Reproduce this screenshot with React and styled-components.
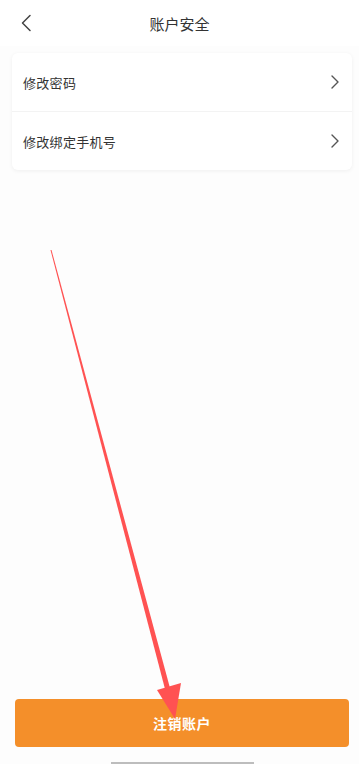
import React from "react";
import styled, { createGlobalStyle } from "styled-components";

const Global = createGlobalStyle`
  html, body {
    margin: 0;
    padding: 0;
    background: #fdfdfd;
    font-family: "Noto Sans CJK SC", "Noto Sans", sans-serif;
  }
`;

const Page = styled.div`
  position: relative;
  width: 359px;
  height: 764px;
  display: flex;
  flex-direction: column;
  background: #fdfdfd;
  overflow: hidden;
`;

const Header = styled.div`
  height: 46px;
  display: flex;
  align-items: center;
  justify-content: center;
  position: relative;
  background: #ffffff;
`;

const Back = styled.button`
  position: absolute;
  left: 16px;
  top: 12px;
  width: 20px;
  height: 22px;
  padding: 0;
  border: none;
  background: none;
  display: flex;
  align-items: center;
  justify-content: center;
`;

const Title = styled.div`
  font-size: 15px;
  color: #333333;
  line-height: 1;
`;

const Card = styled.div`
  margin: 7px 7px 0 12px;
  background: #ffffff;
  border-radius: 6px;
  box-shadow: 0 1px 4px rgba(0, 0, 0, 0.06);
  display: flex;
  flex-direction: column;
`;

const Row = styled.div`
  height: 58px;
  display: flex;
  align-items: center;
  justify-content: space-between;
  padding: 0 12px 0 11px;
  border-top: ${(p) => (p.first ? "none" : "1px solid #f3f3f3")};
`;

const Label = styled.span`
  font-size: 13px;
  color: #333333;
  letter-spacing: 0.3px;
`;

const Spacer = styled.div`
  flex: 1;
`;

const Footer = styled.div`
  padding: 0 10px 0 15px;
  display: flex;
  flex-direction: column;
  align-items: center;
`;

const Danger = styled.button`
  width: 100%;
  height: 48px;
  border: none;
  border-radius: 4px;
  background: #f48f2a;
  color: #ffffff;
  font-family: inherit;
  font-size: 14px;
  font-weight: 700;
  letter-spacing: 0.5px;
`;

const HomeBar = styled.div`
  margin-top: 15px;
  width: 143px;
  height: 2px;
  background: #bdbdbd;
`;

const Annotation = styled.svg`
  position: absolute;
  left: 0;
  top: 0;
  pointer-events: none;
`;

const Chevron = ({ dir = "right" }) => (
  <svg width="10" height="16" viewBox="0 0 10 16">
    <path
      d={dir === "right" ? "M2 2 L8 8 L2 14" : "M8 2 L2 8 L8 14"}
      fill="none"
      stroke="#555555"
      strokeWidth="1.4"
      strokeLinecap="round"
      strokeLinejoin="round"
    />
  </svg>
);

const items = ["修改密码", "修改绑定手机号"];

export default function App() {
  return (
    <>
      <Global />
      <Page>
        <Header>
          <Back>
            <svg width="12" height="18" viewBox="0 0 12 18">
              <path
                d="M10 1.5 L2.5 9 L10 16.5"
                fill="none"
                stroke="#444444"
                strokeWidth="1.5"
                strokeLinecap="round"
                strokeLinejoin="round"
              />
            </svg>
          </Back>
          <Title>账户安全</Title>
        </Header>
        <Card>
          {items.map((t, i) => (
            <Row key={t} first={i === 0}>
              <Label>{t}</Label>
              <Chevron />
            </Row>
          ))}
        </Card>
        <Spacer />
        <Footer>
          <Danger>注销账户</Danger>
          <HomeBar />
        </Footer>
        <Annotation width="359" height="764" viewBox="0 0 359 764">
          <polygon points="50.5,250 51.5,250 170,688 165,689" fill="#ff5252" />
          <polygon points="157,690 181,683 175,719" fill="#ff5252" />
        </Annotation>
      </Page>
    </>
  );
}
